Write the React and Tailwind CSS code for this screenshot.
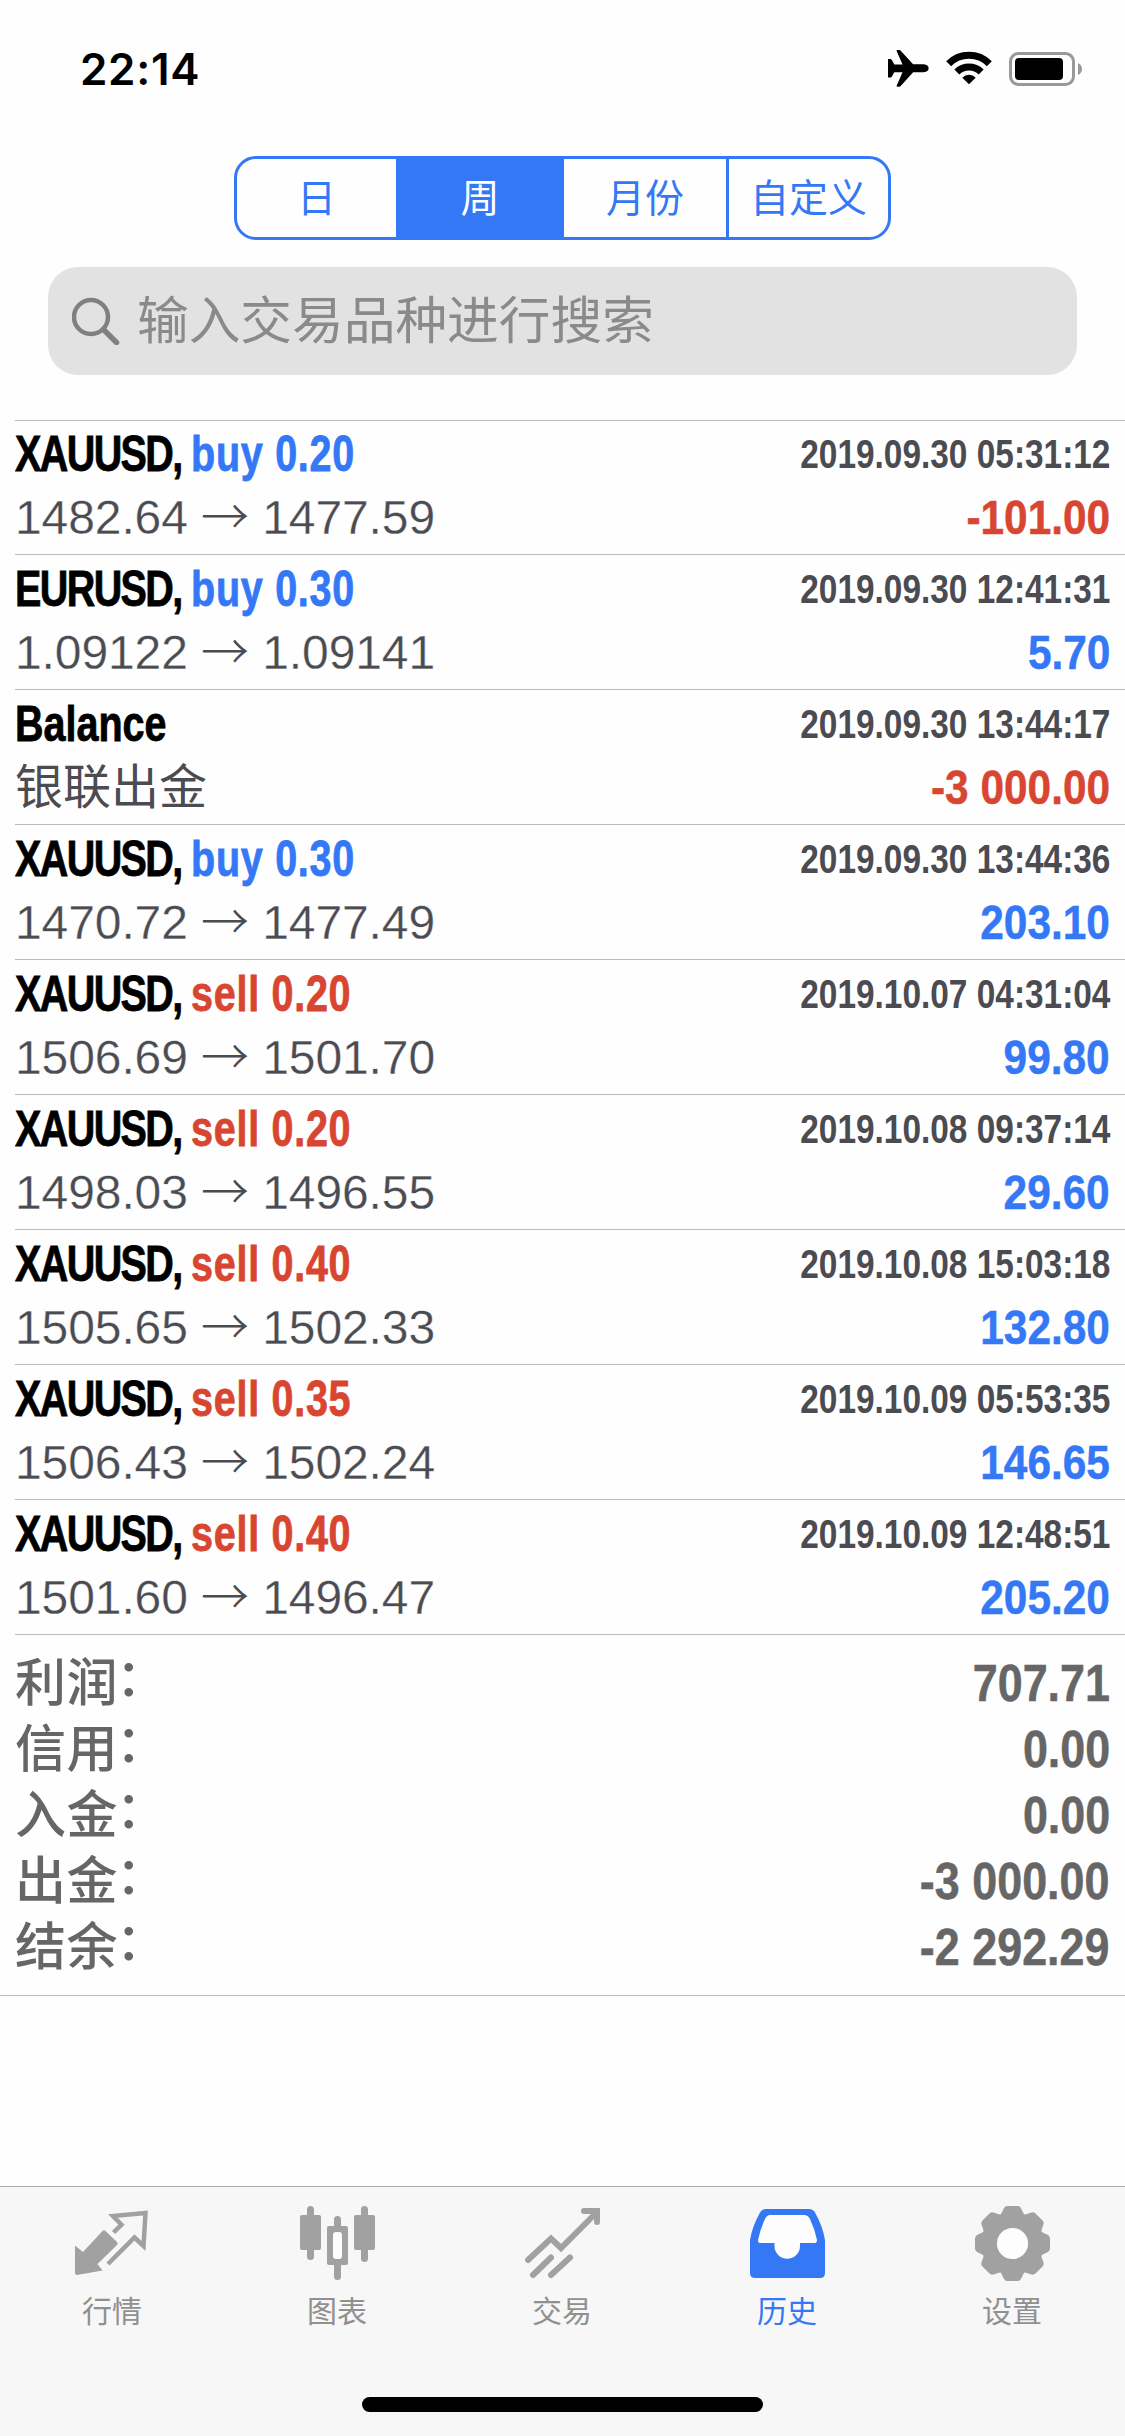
import React from "react";
import clsx from "clsx";

const PERIODS = ["日", "周", "月份", "自定义"];

const DEALS = [
  { symbol: "XAUUSD", side: "buy", volume: "0.20", from: "1482.64", to: "1477.59", time: "2019.09.30 05:31:12", profit: "-101.00" },
  { symbol: "EURUSD", side: "buy", volume: "0.30", from: "1.09122", to: "1.09141", time: "2019.09.30 12:41:31", profit: "5.70" },
  { symbol: "Balance", comment: "银联出金", time: "2019.09.30 13:44:17", profit: "-3 000.00" },
  { symbol: "XAUUSD", side: "buy", volume: "0.30", from: "1470.72", to: "1477.49", time: "2019.09.30 13:44:36", profit: "203.10" },
  { symbol: "XAUUSD", side: "sell", volume: "0.20", from: "1506.69", to: "1501.70", time: "2019.10.07 04:31:04", profit: "99.80" },
  { symbol: "XAUUSD", side: "sell", volume: "0.20", from: "1498.03", to: "1496.55", time: "2019.10.08 09:37:14", profit: "29.60" },
  { symbol: "XAUUSD", side: "sell", volume: "0.40", from: "1505.65", to: "1502.33", time: "2019.10.08 15:03:18", profit: "132.80" },
  { symbol: "XAUUSD", side: "sell", volume: "0.35", from: "1506.43", to: "1502.24", time: "2019.10.09 05:53:35", profit: "146.65" },
  { symbol: "XAUUSD", side: "sell", volume: "0.40", from: "1501.60", to: "1496.47", time: "2019.10.09 12:48:51", profit: "205.20" },
];

const TOTALS = [
  { label: "利润", value: "707.71" },
  { label: "信用", value: "0.00" },
  { label: "入金", value: "0.00" },
  { label: "出金", value: "-3 000.00" },
  { label: "结余", value: "-2 292.29" },
];

const TABS = [
  { label: "行情", Icon: QuotesIcon },
  { label: "图表", Icon: ChartIcon },
  { label: "交易", Icon: TradeIcon },
  { label: "历史", Icon: HistoryIcon, active: true },
  { label: "设置", Icon: SettingsIcon },
];

function QuotesIcon() {
  return (
    <svg viewBox="0 0 75 75" className="size-[75px]">
      <path d="M0 39.5 8 46 27.5 25Q29 23.5 30.5 25L42 36Q43.500 37.500 42 39L22.500 58 27.500 64.500 2 69Q0 69 0 67Z" fill="currentColor" />
      <path d="M38.500 26.500 46.500 18.700 38 10 70.500 7 68.500 40 59.500 31.500 33 58" fill="none" stroke="currentColor" strokeWidth="4.500" />
    </svg>
  );
}

function ChartIcon() {
  return (
    <svg viewBox="0 0 75 75" className="size-[75px]" fill="currentColor">
      <rect x="7" y="0" width="7" height="54" rx="3.500" />
      <rect x="0" y="9" width="21" height="35" rx="2" />
      <rect x="34" y="10" width="7" height="64" rx="3.500" />
      <rect x="27" y="20" width="21" height="39" rx="2" />
      <rect x="33" y="26" width="9" height="27" rx="3" fill="#fdfdfd" />
      <rect x="61" y="0" width="7" height="56" rx="3.500" />
      <rect x="54" y="9" width="21" height="35" rx="2" />
    </svg>
  );
}

function TradeIcon() {
  return (
    <svg viewBox="0 0 75 75" className="size-[75px]" fill="none" stroke="currentColor" strokeWidth="6" strokeLinecap="round">
      <path d="M3 54 26 32.500 36 42 71 7" />
      <path d="M59 5H72V16" />
      <path d="M8 69 26 51.500M26 69 45 51.500" />
    </svg>
  );
}

function HistoryIcon() {
  return (
    <svg viewBox="0 0 75 75" className="size-[75px]">
      <path d="M16 3H59Q63 3 65 6.500Q73 21 75 34V67Q75 72 70 72H5Q0 72 0 67V34Q2 21 10 6.500Q12 3 16 3Z" fill="currentColor" />
      <path d="M20 9H54Q58 9 60 13Q65 24 67 34Q67 37 65 37H50V40A12.750 12.750 0 0 1 24.500 40V37H10Q8 37 8 34Q10 24 15 13Q17 9 20 9Z" fill="#fdfdfd" />
    </svg>
  );
}

function SettingsIcon() {
  return (
    <svg viewBox="0 0 75 75" className="size-[75px]">
      <g transform="translate(37.5 37.5)" fill="currentColor">
        <circle r="30.500" />
        {[0, 45, 90, 135, 180, 225, 270, 315].map((angle) => (
          <path key={angle} d="M-14 -27C-9 -30 -10 -37.500 -5 -37.500H5C10 -37.500 9 -30 14 -27Z" transform={`rotate(${angle})`} />
        ))}
        <circle r="15.600" fill="#fdfdfd" />
      </g>
    </svg>
  );
}

function StatusBar() {
  return (
    <div className="flex h-[156px] items-start justify-between pr-[42px] pl-[80px]">
      <span className="mt-[42px] font-['Inter'] text-[44px] leading-[54px] font-semibold tracking-[0.7px]">22:14</span>
      <div className="mt-[50px] flex items-start">
        <svg viewBox="84 60 124 112" className="h-[37px] w-[41px]">
          <path d="M84 87H92Q96 88 99 96L103 104H128L110 63Q109 60 113 60H118Q121 60 123 63L160 103H192Q207 105 207 115Q207 125 192 127H160L123 168Q121 171 118 171H113Q109 171 110 168L128 127H103L99 134Q96 142 92 143H84Z" />
        </svg>
        <svg viewBox="258 64 138 102" className="mt-[1px] ml-[17px] h-[34px] w-[46px]" fill="none" stroke="#000" strokeWidth="21">
          <path d="M266 102A86.500 86.500 0 0 1 388 102" />
          <path d="M290.500 127A52 52 0 0 1 363.500 127" />
          <path d="M307 144A28 28 0 0 1 347 144L327 164Z" fill="#000" stroke="none" />
        </svg>
        <svg viewBox="0 0 74 34" className="mt-[2px] ml-[17px] h-[34px] w-[74px]">
          <rect x="1.500" y="1.500" width="63" height="31" rx="8" fill="none" stroke="#999" strokeWidth="3" />
          <rect x="6" y="6" width="48" height="22" rx="4" />
          <path d="M69 11Q73 13 73 17T69 23Z" fill="#999" />
        </svg>
      </div>
    </div>
  );
}

function PeriodPicker() {
  return (
    <div className="mx-auto grid h-[84px] w-[657px] grid-cols-[159px_168px_162px_162px] overflow-hidden rounded-[22px] border-[3px] border-[#3478f6] text-[39px] text-[#3478f6]">
      {PERIODS.map((period, i) => (
        <button
          key={period}
          className={clsx("flex items-center justify-center leading-none", i === 1 && "bg-[#3478f6] text-white", i === 3 && "border-l-[3px] border-[#3478f6]")}
        >
          {period}
        </button>
      ))}
    </div>
  );
}

function SearchField() {
  return (
    <div className="mx-[48px] mt-[27px] flex h-[108px] items-center rounded-[30px] bg-[#e2e2e3] pl-[24px]">
      <svg viewBox="0 0 48 48" className="size-[48px]" fill="none" stroke="#808080" strokeWidth="4.500">
        <circle cx="19" cy="20" r="17" />
        <path d="M31.500 32.500 44.500 45.500" strokeWidth="5.500" strokeLinecap="round" />
      </svg>
      <span className="ml-[17px] pt-[1px] text-[51.700px] leading-none text-[#8a8a8a]">输入交易品种进行搜索</span>
    </div>
  );
}

function Deal({ deal }) {
  return (
    <div className="ml-[15px] h-[135px] border-b border-[#bcbcbe] pt-[4px] pr-[15px] first:h-[134px] first:pt-[3px]">
      <div className="flex h-[60px] items-start justify-between leading-[60px] font-bold whitespace-nowrap">
        <div className="origin-left scale-x-[0.79] text-[50px] [-webkit-text-stroke:0.8px_currentColor]">
          <span className={deal.side && "tracking-[-2px]"}>
            {deal.symbol}
            {deal.side && ", "}
          </span>
          {deal.side && (
            <span className={clsx("tracking-[0.9px]", deal.side === "buy" ? "text-[#3478f6]" : "text-[#d84632]")}>
              {deal.side} {deal.volume}
            </span>
          )}
        </div>
        <div className="origin-right scale-x-[0.835] text-[40px] text-[#4b4b52]">{deal.time}</div>
      </div>
      <div className="flex h-[67px] items-baseline justify-between text-[48px] leading-[67px] whitespace-nowrap">
        <div className={clsx("text-[#4b4b52]", !deal.comment && "tracking-[-0.1px] [-webkit-text-stroke:0.3px_#fefefe]")}>
          {deal.comment || (
            <>
              {deal.from} <span className="font-['Noto_Sans_CJK_SC'] leading-none font-light [-webkit-text-stroke:0]">→</span> {deal.to}
            </>
          )}
        </div>
        <div className={clsx("origin-right scale-x-[0.865] text-[49px] font-bold [-webkit-text-stroke:0.5px_currentColor]", deal.profit.startsWith("-") ? "text-[#d84632]" : "text-[#3478f6]")}>{deal.profit}</div>
      </div>
    </div>
  );
}

function Totals() {
  return (
    <div className="border-b border-[#bcbcbe] px-[15px] pt-[16px] pb-[14px] text-[#666]">
      {TOTALS.map((row) => (
        <div key={row.label} className="flex h-[66px] items-baseline justify-between text-[51px] leading-[66px] whitespace-nowrap">
          <span className="font-medium tracking-[0.5px]">
            {row.label}
            <span className="inline-block -translate-x-[2px] -translate-y-[5px]">：</span>
          </span>
          <span className="origin-right scale-x-[0.88] font-bold [-webkit-text-stroke:0.5px_currentColor]">{row.value}</span>
        </div>
      ))}
    </div>
  );
}

function TabBar() {
  return (
    <div className="mt-auto h-[250px] border-t border-[#a9a9ab] bg-[#f7f7f7]">
      <div className="grid h-[210px] grid-cols-5 pt-[19px]">
        {TABS.map(({ label, Icon, active }) => (
          <button key={label} className={clsx("flex flex-col items-center pr-[1px]", active ? "text-[#3478f6]" : "text-[#a1a1a1]")}>
            <Icon />
            <span className={clsx("mt-[16px] text-[30px] leading-[30px]", !active && "text-[#909090]")}>{label}</span>
          </button>
        ))}
      </div>
      <div className="mx-auto h-[15px] w-[401px] rounded-full bg-black" />
    </div>
  );
}

export default function App() {
  return (
    <div className="flex h-[2436px] w-[1125px] flex-col overflow-hidden bg-[#fefefe] font-['Liberation_Sans','Noto_Sans_CJK_SC',sans-serif] text-black">
      <StatusBar />
      <PeriodPicker />
      <SearchField />
      <div className="mt-[45px] ml-[15px] border-t border-[#bcbcbe]" />
      <div>
        {DEALS.map((deal) => (
          <Deal key={deal.time} deal={deal} />
        ))}
      </div>
      <Totals />
      <TabBar />
    </div>
  );
}
